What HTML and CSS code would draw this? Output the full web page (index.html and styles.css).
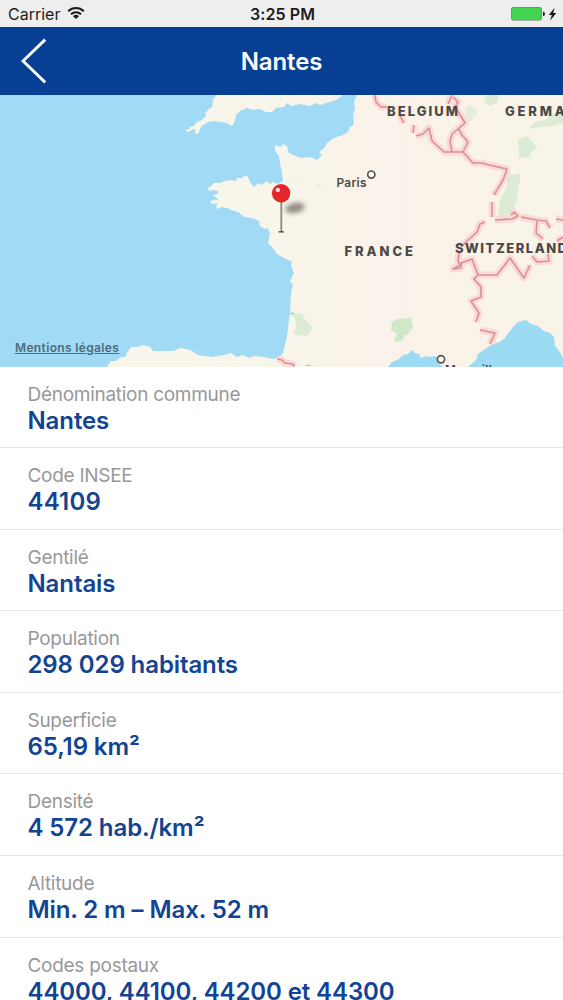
FILE: index.html
```html
<!DOCTYPE html>
<html lang="fr">

<head>
	<meta charset="UTF-8">
	<meta name="viewport" content="width=device-width, initial-scale=1.0">
	<title>Nantes</title>
	<link rel="stylesheet" href="styles.css">
</head>

<body>
	<div class="status-bar">
		<div class="carrier">
			<span>Carrier</span>
			<svg width="18" height="14" viewBox="0 0 18 14" fill="none" stroke="#1c1c1c" stroke-width="2">
				<path d="M1.2 5.2a11.2 11.2 0 0 1 15.6 0" />
				<path d="M4 8.3a7.2 7.2 0 0 1 10 0" />
				<path d="M9 13L6 10.2a4.3 4.3 0 0 1 6 0z" fill="#1c1c1c" stroke="none" />
			</svg>
		</div>
		<span class="time">3:25 PM</span>
		<div class="battery">
			<svg width="46" height="14" viewBox="0 0 46 14">
				<rect x=".5" y=".5" width="30" height="12.6" rx="1.6" fill="#43d551" stroke="#6f9275" />
				<path d="M32 4.6q2 .4 2 2.3t-2 2.3z" fill="#222" />
				<path d="M43.6.8L37.8 8h3l-1.6 5.4L45.4 6h-3.2z" fill="#1c1c1c" />
			</svg>
		</div>
	</div>

	<header class="navbar">
		<button class="back" aria-label="Retour">
			<svg width="26" height="46" viewBox="0 0 26 46" fill="none" stroke="#fff" stroke-width="2.9">
				<path d="M24.2 1.6L2 23l22.2 21.4" />
			</svg>
		</button>
		<h1>Nantes</h1>
	</header>

	<div class="map">
		<svg class="map-canvas" viewBox="0 95 563 271.5">
			<defs>
				<filter id="soft" x="-50%" y="-80%" width="200%" height="260%">
					<feGaussianBlur stdDeviation="2.8" />
				</filter>
				<linearGradient id="ground" gradientUnits="userSpaceOnUse" x1="0" y1="0" x2="563" y2="0">
					<stop offset=".5" stop-color="#f8f5ea" />
					<stop offset=".72" stop-color="#faf2ea" />
					<stop offset="1" stop-color="#f8f4e8" />
				</linearGradient>
			</defs>
			<rect y="95" width="563" height="272" fill="#a1daf4" />

			<!-- land -->
			<g fill="url(#ground)">
				<path d="M217 95L213 99L212 107L208 110L205 113L206 116L202 120L197 122L194 126L191 126L189 129L185 130L189 132L193 129L196 130L195 133L198 134L201 127L203 125L208 122L214 121L220 122L227 123L232 126L235 121L236 115L240 111L247 108L253 110L260 109L266 112L272 112L276 108L284 107L287 103L291 106L300 104L310 106L316 103L320 105L330 102L336 100L340 97L343 95z" />
				<path d="M357 95L354 102L355 109L353 114L354 124L350 127L348 132L343 135L334 138L327 143L325 147L319 152L322 155L317 160L310 157L301 158L293 155L288 152L287 146L283 144L281 147L275 145L275 151L279 156L280 164L282 172L283 181L278 184L273 182L270 184L267 181L262 185L258 183L254 187L250 182L248 177L245 175L242 178L237 178L236 181L230 180L225 181L220 183L214 183L211 186L208 188L209 191L213 190L218 191L218 194L212 195L219 199L210 201L212 204L217 203L216 209L222 207L227 208L231 210L238 212L244 217L252 218L259 221L260 226L265 229L268 228L270 234L268 243L273 248L277 254L282 257L292 262L291 265L294 273L290 281L293 285L291 292L290 313L287 336L283 353L280 357L273 359L263 357L253 356L250 358L242 355L237 357L231 353L224 355L212 357L198 355L190 350L181 348L173 351L153 351L150 347L143 345L137 347L131 347L127 353L125 357L121 357L116 361L111 361L107 367L563 367L563 95z" />
			</g>

			<!-- mediterranean -->
			<g fill="#9ddaf4">
				<path d="M388 367l4-5 7-3 4-4 5-1 4-4 3 3 4 1 2 4 5-2 3 1 6-1 5 3-2 4 5 4zM468 367L476 360L478 354L485 349L493 344L500 342L505 338L509 332L514 326L518 322L526 320L531 324L538 326L544 331L550 333L554 337L555 346L560 352L563 358V367z" />
				<path d="M289 314l3-2 4 2-3 1zM304 366q5-3 9 0z" />
			</g>

			<!-- parks and forests -->
			<g fill="#dcebd4">
				<path d="M293 314l8-1 4 6 8 9-6 8-10-1-4-3 4-6z" />
				<path d="M392 322l5-3 14-1 2 9-5 7-4 2-1 4-7 2-2-3 3-5-6-4z" fill="#cfe8c8" />
				<path d="M507 171l5 4 8-2v9l-2 6-1 10-3 9v9l-16 1 2-17 7-13z" />
				<path d="M518 139l10-3 2 3 7 9-6 4-1 5-11 1z" />
				<path d="M486 95h13l-2 8-7 3-6-4zM563 110v13l-10 3-12 1-13 2 8-7 10-2 6-6z" />
				<path d="M466 107l5-2 7 7-7 9-7 3z" opacity=".7" />
				<path d="M317 184l5 2-5 1z" />
			</g>

			<!-- borders: wide halo, then the line itself -->
			<g fill="none" stroke-linejoin="round">
				<g stroke="#fbd3cf" stroke-width="7" opacity=".8">
					<path id="b" d="M375 95l1 7 5 5 6 0M400 116l4 7M414 125l-1 8M416 136l7-2 6-6 3 13 12 11h19l10 11h9l7 2 18 4-4 11-9 15M448 104l4-9M453 97l5 5-3 5 4 6 6 10-7 6-6 5-2 7 2 11M458 128l4 7 6 7-5 10M492 202v15M495 220l17-1 6-3-4-4-3 3M521 217l16 3M556 219l7 1M485 222l-5 2-3 8-11 10-5 5M459 253l-1 8 2 4-7 4 8-1v-5l11-4 6 16h19l13-17 14 20 6-13M532 256l5 6 12-1-1-7M478 275l-4 4 7 8v10l-10 4 8 12-3 9M480 330l15 3-5 11M537 221l-1 12 7 6M537 220l9 1 4 7M563 237l-6 4M277 359l5 1 3 3 7 1 3 2" />
				</g>
				<g stroke="#d98f96" stroke-width="1.6">
					<use href="#b" />
				</g>
			</g>

			<g class="country">
				<text x="387" y="116.3" textLength="71">BELGIUM</text>
				<text x="505" y="116.3" textLength="85">GERMANY</text>
				<text x="344.5" y="255.6" textLength="68.5">FRANCE</text>
				<text x="455" y="252.5" textLength="112">SWITZERLAND</text>
			</g>
			<g class="city">
				<text x="336.5" y="187" textLength="30">Paris</text>
				<text x="445" y="374" textLength="54">Marseille</text>
				<circle cx="371.3" cy="174.6" r="3.6" />
				<circle cx="441" cy="359.3" r="3.6" />
			</g>

			<!-- pin -->
			<ellipse cx="295" cy="208" rx="10" ry="5" transform="rotate(-12 295 208)" fill="#655e58" opacity=".7" filter="url(#soft)" />
			<path d="M281.3 200v31" stroke="#8b8986" stroke-width="1.8" />
			<path d="M278.6 231.8h5.2" stroke="#5e5c5a" stroke-width="1.6" />
			<circle cx="281.1" cy="193.2" r="9.2" fill="#e4262b" />
			<circle cx="277.8" cy="189.9" r="2.2" fill="#ffd9d8" />
		</svg>
		<a class="legal" href="#">Mentions légales</a>
	</div>

	<dl class="infos">
		<div class="row">
			<dt>Dénomination commune</dt>
			<dd>Nantes</dd>
		</div>
		<div class="row">
			<dt>Code INSEE</dt>
			<dd class="code">44109</dd>
		</div>
		<div class="row">
			<dt>Gentilé</dt>
			<dd>Nantais</dd>
		</div>
		<div class="row">
			<dt>Population</dt>
			<dd>298 029 habitants</dd>
		</div>
		<div class="row">
			<dt>Superficie</dt>
			<dd>65,19 km²</dd>
		</div>
		<div class="row">
			<dt>Densité</dt>
			<dd>4 572 hab./km²</dd>
		</div>
		<div class="row">
			<dt>Altitude</dt>
			<dd>Min. 2 m – Max. 52 m</dd>
		</div>
		<div class="row">
			<dt>Codes postaux</dt>
			<dd>44000, 44100, 44200 et 44300</dd>
		</div>
	</dl>
</body>

</html>
```

FILE: styles.css
```css
* {
	box-sizing: border-box;
}

body {
	margin: 0;
	height: 1000px;
	overflow: hidden;
	background-color: #fff;
	font-family: Inter, "Liberation Sans", sans-serif;
}

.status-bar {
	display: grid;
	grid-template-columns: 1fr auto 1fr;
	align-items: center;
	height: 27px;
	padding: 1px 6px 0 8px;
	background-color: #efeeef;
	color: #1c1c1c;
	font-size: 16px;
}

.carrier {
	display: flex;
	align-items: center;
	gap: 7px;
}

.carrier svg {
	margin-top: -2px;
}

.time {
	font-weight: 600;
	letter-spacing: 0.1px;
}

.battery {
	display: flex;
	justify-content: flex-end;
}

.navbar {
	display: grid;
	grid-template-columns: 60px 1fr 60px;
	align-items: center;
	height: 68px;
	background-color: #073f94;
	color: #fff;
}

.navbar h1 {
	margin: 0;
	text-align: center;
	font-size: 24px;
	font-weight: 600;
	letter-spacing: -0.1px;
}

.back {
	display: flex;
	padding: 0 0 0 21px;
	border: none;
	background-color: transparent;
	cursor: pointer;
}

.map {
	position: relative;
	height: 271.5px;
	overflow: hidden;
}

.map-canvas {
	display: block;
	width: 100%;
	height: 100%;
}

.country {
	fill: #4b4845;
	font-size: 13px;
	font-weight: 800;
}

.city {
	fill: #4b4845;
	font-size: 11.8px;
	font-weight: 600;
}

.city circle {
	fill: #fff;
	stroke: #55524f;
	stroke-width: 1.7;
}

/* sits over the map, bottom left */
.legal {
	position: absolute;
	left: 15px;
	bottom: 12px;
	color: #4c6c7b;
	font-size: 12px;
	font-weight: 600;
	letter-spacing: 0.35px;
}

.infos {
	margin: 0;
}

.row {
	height: 81.58px;
	padding: 16px 27.5px 0;
	border-bottom: 1px solid #e6e6e8;
}

dt {
	color: #98989a;
	font-size: 19px;
	line-height: 23px;
	letter-spacing: -0.28px;
}

dd {
	margin: 0;
	color: #124493;
	font-size: 24px;
	font-weight: 600;
	line-height: 29px;
	letter-spacing: -0.1px;
	white-space: nowrap;
}

.code {
	letter-spacing: 0.2px;
}
```
